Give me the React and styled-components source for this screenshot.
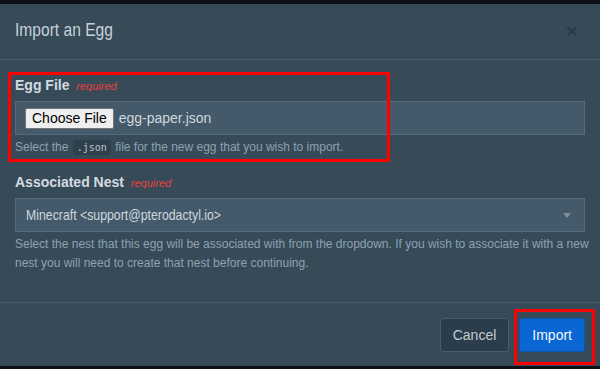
import React from 'react';
import styled, { createGlobalStyle } from 'styled-components';

const GlobalStyle = createGlobalStyle`
    html, body {
        margin: 0;
        padding: 0;
        background: #0b1116;
    }
    body {
        font-family: "Liberation Sans", Arial, sans-serif;
    }
    * { box-sizing: border-box; }
`;

const Backdrop = styled.div`
    width: 600px;
    height: 369px;
    padding: 4px 0 3px;
    position: relative;
    overflow: hidden;
`;

const Modal = styled.div`
    background: #364a58;
    height: 362px;
    display: flex;
    flex-direction: column;
`;

const Header = styled.div`
    height: 56px;
    display: flex;
    align-items: center;
    justify-content: space-between;
    padding: 0 15px 3px;
    border-bottom: 1px solid #4a5d6a;
`;

// narrow face (Arial Narrow look) — no narrow font installed, so squeeze it
const Narrow = styled.span`
    display: inline-block;
    font-size: ${p => p.size};
    line-height: 1.2;
    transform: scaleX(0.82);
    transform-origin: left center;
    white-space: nowrap;
`;

const Title = styled.h4`
    margin: 0;
    display: flex;
    align-items: center;
    font-weight: 400;
    color: #c9d1d8;
`;

const Close = styled.span`
    font-size: 21px;
    font-weight: 700;
    line-height: 1;
    color: #000;
    opacity: 0.2;
    margin-right: 7px;
`;

const Body = styled.div`
    padding: 15px 15px 14px;
    border-bottom: 1px solid #4a5d6a;
`;

const FormGroup = styled.div`
    margin-bottom: 15px;
`;

const Label = styled.label`
    display: block;
    font-size: 14px;
    line-height: 20px;
    font-weight: 700;
    color: #d3dbe1;
    margin-bottom: 5px;

    span {
        font-size: 11px;
        font-weight: 400;
        font-style: italic;
        color: #e8413a;
        margin-left: 3px;
    }
`;

const Field = styled.div`
    height: 34px;
    display: flex;
    align-items: center;
    gap: 5px;
    padding: 0 ${p => p.pad || '9px'};
    background: #445a6a;
    border: 1px solid #566b7a;
    font-size: 14px;
    color: #cfd7dd;
`;

const FileButton = styled.span`
    height: 21px;
    padding: 0 6px;
    display: inline-flex;
    align-items: center;
    background: #efefef;
    border: 1px solid #767676;
    border-radius: 2px;
    color: #000;
    font-size: 14px;
`;

const Caret = styled.span`
    margin-left: auto;
    width: 0;
    height: 0;
    border-left: 4px solid transparent;
    border-right: 4px solid transparent;
    border-top: 5px solid #7f909c;
    margin-right: 3px;
`;

const Help = styled.p`
    margin: 3px -8px 0 0;
    font-size: 12px;
    line-height: 19px;
    color: #8ea2b1;

    code {
        font-family: "DejaVu Sans Mono", "Liberation Mono", monospace;
        font-size: 10px;
        padding: 2px 4px;
        margin: 0 1px;
        background: #2f404c;
        color: #b8c3cb;
        border-radius: 3px;
    }
`;

const Footer = styled.div`
    display: flex;
    justify-content: flex-end;
    gap: 10px;
    padding: 15px 15px 0;
`;

const Button = styled.button`
    height: 34px;
    padding: 0 12px;
    font-family: inherit;
    font-size: 14px;
    border-radius: 3px;
    border: 1px solid ${p => p.primary ? '#0a57b3' : '#4b5c69'};
    background: ${p => p.primary ? '#0966d2' : '#2b3d4a'};
    color: ${p => p.primary ? '#f3f7fb' : '#c3ccd3'};
`;

const Highlight = styled.div`
    position: absolute;
    border: 3px solid #ff0000;
    pointer-events: none;
`;

export default function App() {
    return (
        <>
            <GlobalStyle />
            <Backdrop>
                <Modal>
                    <Header>
                        <Title><Narrow size="19px">Import an Egg</Narrow></Title>
                        <Close>×</Close>
                    </Header>
                    <Body>
                        <FormGroup>
                            <Label>Egg File <span>required</span></Label>
                            <Field>
                                <FileButton>Choose File</FileButton>
                                <span>egg-paper.json</span>
                            </Field>
                            <Help>Select the <code>.json</code> file for the new egg that you wish to import.</Help>
                        </FormGroup>
                        <FormGroup>
                            <Label>Associated Nest <span>required</span></Label>
                            <Field pad="10px">
                                <Narrow size="15px">Minecraft &lt;support@pterodactyl.io&gt;</Narrow>
                                <Caret />
                            </Field>
                            <Help>Select the nest that this egg will be associated with from the dropdown. If you wish to associate it with a new nest you will need to create that nest before continuing.</Help>
                        </FormGroup>
                    </Body>
                    <Footer>
                        <Button>Cancel</Button>
                        <Button primary>Import</Button>
                    </Footer>
                </Modal>
                <Highlight style={{ left: 8, top: 72, width: 382, height: 90 }} />
                <Highlight style={{ left: 514, top: 309, width: 81, height: 56 }} />
            </Backdrop>
        </>
    );
}
